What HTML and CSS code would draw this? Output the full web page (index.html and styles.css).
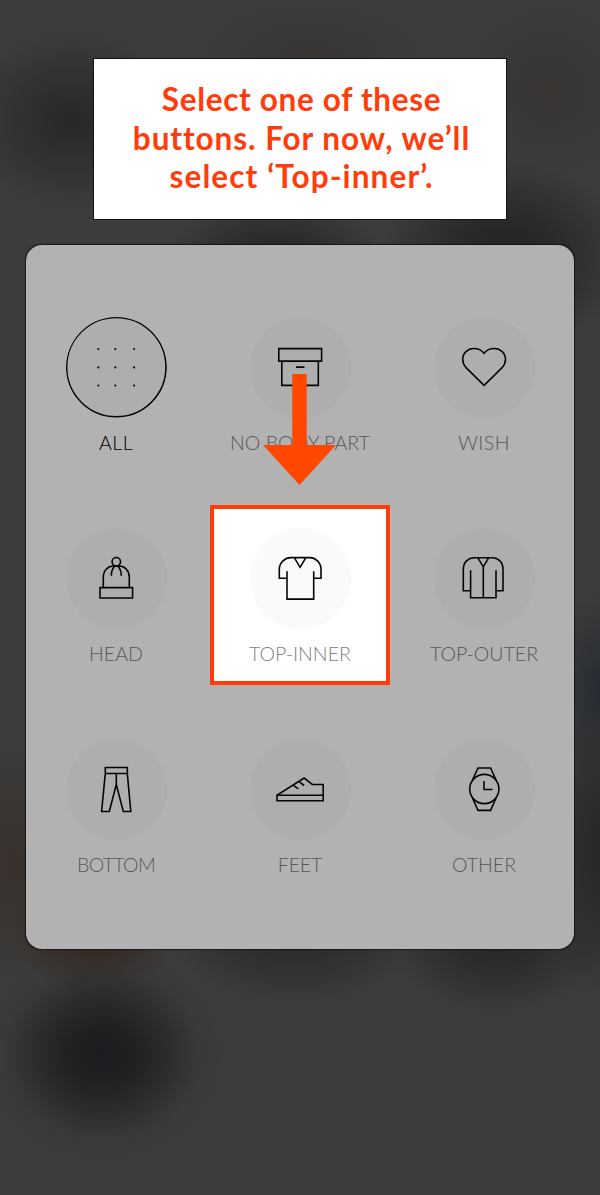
FILE: index.html
```html
<!DOCTYPE html>
<html lang="en">
<head>
<meta charset="utf-8">
<title>Select a category</title>
<link rel="stylesheet" href="styles.css">
</head>
<body>
<main class="screen">
  <h1 class="callout"><span class="line line-one">Select one of these</span><span class="line line-two">buttons. For now, we’ll</span><span class="line line-three">select ‘Top-inner’.</span></h1>
  <section class="panel">
    <div class="item selected">
      <svg class="icon" viewBox="-50.3 -50.1 101 101"><circle r="49.7"/><g class="dots"><circle cx="-18" cy="-18" r="1.1"/><circle cx="-1" cy="-18" r="1.1"/><circle cx="17.8" cy="-18" r="1.1"/><circle cx="-18" cy="0.3" r="1.1"/><circle cx="-1" cy="0.3" r="1.1"/><circle cx="17.8" cy="0.3" r="1.1"/><circle cx="-18" cy="18.5" r="1.1"/><circle cx="-1" cy="18.5" r="1.1"/><circle cx="17.8" cy="18.5" r="1.1"/></g></svg>
      <span class="label all">ALL</span>
    </div>
    <div class="item">
      <svg class="icon" viewBox="-50.3 -50.1 101 101"><path d="M-21.5-18.5H21.3V-6H-21.5ZM-18.5-6V18.3H18V-6M-4.3 0H4.2"/></svg>
      <span class="label body-part">NO BODY PART</span>
      <svg class="arrow" viewBox="0 0 73 111"><path d="M29.3 0H43.7V71H73L36.5 111 0 71H29.3Z"/></svg>
    </div>
    <div class="item">
      <svg class="icon" viewBox="-50.3 -50.1 101 101"><path d="M-.2 18.3-18 .8C-20.5-1.8-21.6-4.5-21.6-7.5C-21.6-14-16.5-18.6-10.5-18.6C-6.2-18.6-2.5-16.8-.2-13.8C2.1-16.8 5.8-18.6 10.1-18.6C16.1-18.6 21.2-14 21.2-7.5C21.2-4.5 20.1-1.8 17.6.8Z"/></svg>
      <span class="label wish">WISH</span>
    </div>
    <div class="item">
      <svg class="icon" viewBox="-50.3 -50.3 101 101"><circle cy="-16.6" r="4.2"/><path d="M-13 9.3V-1C-13-8-8-12.3-3-12.3H3C8-12.3 13-8 13-1V9.3M-1.5-12.3C-4-9.5-5-7-5-2.5M1.5-12.3C4-9.5 5-7 5-2.5M-16.3 9.3H16.3V19.7H-16.3Z"/></svg>
      <span class="label head">HEAD</span>
    </div>
    <div class="item target">
      <svg class="icon" viewBox="-50.3 -50.3 101 101"><path d="M-13.3 0H-21V-9C-21-16-15-20.7-9.5-20.7H9.5C15-20.7 20.7-16 20.7-9V0H13.4M-13.3-7V20.8H13.4V-7M-6-20.7-.2-11 5.6-20.7"/></svg>
      <span class="label inner">TOP-INNER</span>
    </div>
    <div class="item">
      <svg class="icon" viewBox="-50.3 -50.3 101 101"><path d="M-13.7 12.5H-21V-9C-21-16-16-20.5-10-20.5H8C14-20.5 18.7-16 18.7-9V12.5H11.7M-13.7-8V19.5H11.7V-8M-6.5-20.5-1-11.5 4.3-20.5M-1-11.5V19.5"/></svg>
      <span class="label outer">TOP-OUTER</span>
    </div>
    <div class="item">
      <svg class="icon" viewBox="-50.3 -50.5 101 101"><path d="M-11-22H11V-16H-11ZM-11-16-14.7 22H-7L0-5 7 22H14.5L11-16M0-16V-5"/></svg>
      <span class="label bottom">BOTTOM</span>
    </div>
    <div class="item">
      <svg class="icon" viewBox="-50.3 -50.5 101 101"><path d="M-23.3 5.7H22.9V11.3H-23.3ZM-23.3 5.7 3.8-11.5 12-5H22.9V5.7M-6.8-4.2-2-.7M-1.2-7.8 3.8-4"/></svg>
      <span class="label feet">FEET</span>
    </div>
    <div class="item">
      <svg class="icon" viewBox="-50.3 -50.5 101 101"><circle cy="-.5" r="14.6"/><path d="M-12-9-6.3-21.5H6.3L12-9M-12 8-6.3 20.9H6.3L12 8M-.3-8.5V0H8.3"/></svg>
      <span class="label other">OTHER</span>
    </div>
  </section>
</main>
</body>
</html>
```

FILE: styles.css
```css
* { box-sizing: border-box; }
body { margin: 0; font-family: Lato, "Noto Sans", sans-serif; }

.screen {
  height: 1195px;
  padding-top: 58px;
  display: flex;
  flex-direction: column;
  align-items: center;
  gap: 25px;
  overflow: hidden;
  background:
    radial-gradient(ellipse 125px 110px at 102px 1054px, #1d1d21 0%, #202023 25%, rgba(38, 38, 41, .75) 52%, rgba(50, 50, 52, .3) 78%, transparent 100%),
    radial-gradient(ellipse 85px 65px at 95px 930px, #38261b 0%, #352b25 40%, transparent 100%),
    radial-gradient(ellipse 130px 75px at 295px 930px, #282828 0%, #303030 50%, transparent 100%),
    radial-gradient(ellipse 110px 80px at 497px 935px, #242424 0%, #2d2d2d 45%, transparent 100%),
    radial-gradient(ellipse 60px 150px at 600px 850px, #272727 0%, #2e2e2e 45%, transparent 100%),
    radial-gradient(ellipse 70px 120px at 15px 865px, #38302b 0%, transparent 100%),
    radial-gradient(ellipse 50px 100px at 600px 690px, #252a31 0%, transparent 100%),
    radial-gradient(ellipse 110px 90px at 72px 120px, #28282b 0%, #303032 45%, transparent 100%),
    radial-gradient(ellipse 110px 55px at 275px 258px, #202020 0%, #2d2d2d 45%, transparent 100%),
    radial-gradient(ellipse 125px 95px at 505px 255px, #222222 0%, #2b2b2b 45%, transparent 100%),
    radial-gradient(ellipse 90px 90px at 550px 90px, #383533 0%, transparent 100%),
    radial-gradient(ellipse 120px 55px at 310px 55px, #393634 0%, transparent 100%),
    #3c3c3c;
}

.callout {
  width: 414px;
  height: 162px;
  margin: 0;
  padding: 21px 0 0 3px;
  border: 1px solid #111;
  background: #fff;
  color: #ff3c0a;
  font-size: 31.5px;
  font-weight: 700;
  line-height: 38.5px;
  text-align: center;
}
.line { display: block; white-space: nowrap; }
.line-one { letter-spacing: .68px; }
.line-two { letter-spacing: .95px; }
.line-three { letter-spacing: 1.12px; }

.panel {
  width: 548px;
  height: 704px;
  flex: none;
  padding-top: 49px;
  border-radius: 16px;
  background: #b2b2b2;
  box-shadow: 0 0 1px .5px rgba(15, 15, 15, .75);
  display: grid;
  grid-template-columns: repeat(3, 180px);
  grid-auto-rows: 180px;
  gap: 31.4px 4px;
}

.item {
  position: relative;
  display: flex;
  flex-direction: column;
  align-items: center;
  gap: 13px;
  padding-top: 22.5px;
  color: #585858;
}
.item.selected { color: #000; }
.target {
  background: #fff;
  color: #808080;
  border: 4px solid #ff3c0a;
  padding-top: 18.5px;
}

.icon {
  width: 101px;
  height: 101px;
  flex: none;
  border-radius: 50%;
  background: #aeaeae;
  fill: none;
  stroke: #050505;
  stroke-width: 1.6;
}
.target .icon { background: #fafafa; }
.dots { fill: #111; stroke: none; }

.label {
  margin-top: -1px;
  font-size: 19.6px;
  font-weight: 300;
  line-height: 25px;
  white-space: nowrap;
}
.all { letter-spacing: .5px; }
.wish { letter-spacing: .4px; }
.bottom { letter-spacing: -.7px; }
.feet { letter-spacing: -.2px; }

.arrow {
  position: absolute;
  left: 53px;
  top: 80px;
  width: 73px;
  height: 111px;
  fill: #ff4700;
  z-index: 2;
}
```
